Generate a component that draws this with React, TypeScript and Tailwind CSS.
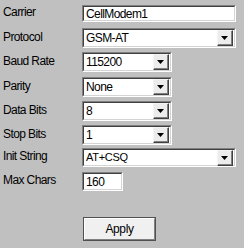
import type { ReactNode } from 'react';

const font = { fontFamily: '"Liberation Sans", Arial, sans-serif' };

function Sunken({ className, children }: { className: string; children?: ReactNode }) {
  // classic win32 sunken edit border: two nested bevels
  return (
    <div className={`box-border border border-t-[#808080] border-l-[#808080] border-b-white border-r-white ${className}`}>
      <div className="box-border h-full w-full border border-t-[#404040] border-l-[#404040] border-b-[#d4d4d4] border-r-[#d4d4d4] bg-white flex items-center">
        {children}
      </div>
    </div>
  );
}

function ArrowButton() {
  return (
    <div className="box-border ml-auto mr-px h-[16px] w-[16px] border border-t-[#f4f4f4] border-l-[#f4f4f4] border-b-[#404040] border-r-[#404040]">
      <div className="box-border h-full w-full border-b border-r border-[#808080] bg-[#ececec] flex items-center justify-center pt-px">
        <svg width="7" height="4" viewBox="0 0 7 4">
          <path d="M0 0h7L3.5 4z" fill="#000" />
        </svg>
      </div>
    </div>
  );
}

function Row({ label, mt, children }: { label: string; mt: string; children: ReactNode }) {
  return (
    <div className={`flex items-center ${mt}`}>
      <span className="w-[79px] text-[12px] tracking-[-0.6px] text-black -mt-[3px] leading-none">{label}</span>
      {children}
    </div>
  );
}

function Combo({ value, w, h = 'h-[20px]', small }: { value: string; w: string; h?: string; small?: boolean }) {
  return (
    <Sunken className={`${w} ${h}`}>
      <span
        className={`pl-[2px] text-black leading-none ${small ? 'text-[11px] tracking-[-0.3px]' : 'text-[12px] tracking-[-0.6px]'}`}
      >
        {value}
      </span>
      <ArrowButton />
    </Sunken>
  );
}

export default function App() {
  return (
    <div className="w-[244px] h-[248px] bg-[#c0c0c0] pl-[3px] pt-[5px] overflow-hidden" style={font}>
      <Row label="Carrier" mt="mt-0">
        <Sunken className="w-[154px] h-[17px]">
          <span className="pl-[2px] text-[12px] tracking-[-0.6px] leading-none text-black">CellModem1</span>
        </Sunken>
      </Row>
      <Row label="Protocol" mt="mt-[6px]">
        <Combo value="GSM-AT" w="w-[154px]" />
      </Row>
      <Row label="Baud Rate" mt="mt-[4px]">
        <Combo value="115200" w="w-[90px]" />
      </Row>
      <Row label="Parity" mt="mt-[5px]">
        <Combo value="None" w="w-[90px]" />
      </Row>
      <Row label="Data Bits" mt="mt-[4px]">
        <Combo value="8" w="w-[90px]" />
      </Row>
      <Row label="Stop Bits" mt="mt-[4px]">
        <Combo value="1" w="w-[90px]" />
      </Row>
      <Row label="Init String" mt="mt-[3px]">
        <Combo value="AT+CSQ" w="w-[154px]" h="h-[19px]" small />
      </Row>
      <Row label="Max Chars" mt="mt-[5px]">
        <Sunken className="w-[41px] h-[19px]">
          <span className="pl-[2px] text-[12px] tracking-[-0.6px] leading-none text-black">160</span>
        </Sunken>
      </Row>
      <div className="flex mt-[26px] pl-[80px]">
        <button className="box-border w-[73px] h-[24px] border border-[#505050]">
          <div className="box-border h-full w-full border border-t-white border-l-white border-b-[#808080] border-r-[#808080] bg-[#f0f0f0] flex items-center justify-center text-[12px] tracking-[-0.4px] text-black">
            Apply
          </div>
        </button>
      </div>
    </div>
  );
}
